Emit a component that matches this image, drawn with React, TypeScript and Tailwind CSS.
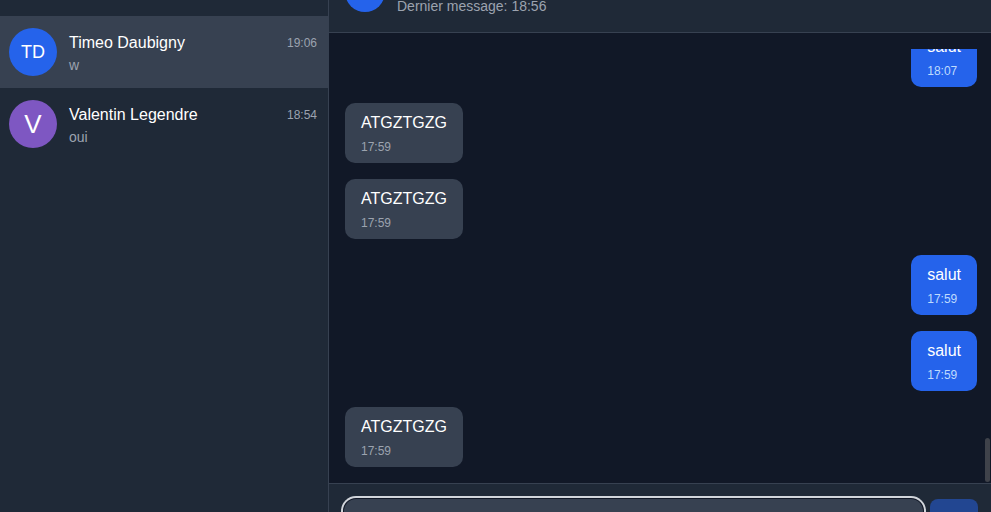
import React, { useLayoutEffect, useRef } from "react";
import { MoreVertical, Send } from "lucide-react";

type Conversation = {
  id: number;
  initials: string;
  name: string;
  preview: string;
  time: string;
  color: string;
  active?: boolean;
};

type Message = { id: number; text: string; time: string; mine: boolean };

const conversations: Conversation[] = [
  { id: 1, initials: "TD", name: "Timeo Daubigny", preview: "w", time: "19:06", color: "bg-[#2563eb]", active: true },
  { id: 2, initials: "V", name: "Valentin Legendre", preview: "oui", time: "18:54", color: "bg-[#7e57c2]" },
];

const history: Message[] = Array.from({ length: 52 }, (_, i) => ({
  id: i,
  text: i % 3 === 0 ? "salut" : i % 3 === 1 ? "ATGZTGZG" : "ça va ?",
  time: "17:5" + (i % 10),
  mine: i % 2 === 0,
}));

const messages: Message[] = [
  ...history,
  { id: 100, text: "salut", time: "18:07", mine: true },
  { id: 101, text: "ATGZTGZG", time: "17:59", mine: false },
  { id: 102, text: "ATGZTGZG", time: "17:59", mine: false },
  { id: 103, text: "salut", time: "17:59", mine: true },
  { id: 104, text: "salut", time: "17:59", mine: true },
  { id: 105, text: "ATGZTGZG", time: "17:59", mine: false },
];

function Bubble({ msg }: { msg: Message }) {
  return (
    <div className={msg.mine ? "flex justify-end shrink-0" : "flex justify-start shrink-0"}>
      <div
        className={
          msg.mine
            ? "bg-[#2563eb] text-white rounded-[10px] px-4 py-2"
            : "bg-[#374151] text-white rounded-[10px] px-4 py-2"
        }
      >
        <p className="text-base leading-6">{msg.text}</p>
        <p className={msg.mine ? "text-xs leading-4 mt-1 text-[#bfdbfe]" : "text-xs leading-4 mt-1 text-[#9ca3af]"}>
          {msg.time}
        </p>
      </div>
    </div>
  );
}

export default function App() {
  const listRef = useRef<HTMLDivElement>(null);

  useLayoutEffect(() => {
    if (listRef.current) listRef.current.scrollTop = listRef.current.scrollHeight;
  }, []);

  return (
    <div className="h-[512px] overflow-hidden bg-[#111827] font-['Liberation_Sans',Arial,sans-serif]">
      <div className="-mt-12 h-[608px] flex">
        {/* Sidebar */}
        <aside className="w-[329px] shrink-0 bg-[#1f2937] border-r border-[#374151] flex flex-col">
          <div className="h-16 px-4 flex items-center">
            <h1 className="text-xl font-semibold text-white">Messages</h1>
          </div>
          <div className="flex flex-col">
            {conversations.map((c) => (
              <div
                key={c.id}
                className={
                  c.active
                    ? "h-[72px] flex items-center gap-3 pl-[9px] pr-[11px] bg-[#374151]"
                    : "h-[72px] flex items-center gap-3 pl-[9px] pr-[11px]"
                }
              >
                <div
                  className={`w-12 h-12 rounded-full shrink-0 flex items-center justify-center text-white ${c.color} ${
                    c.initials.length === 1 ? "text-[26px]" : "text-lg"
                  }`}
                >
                  {c.initials}
                </div>
                <div className="flex-1 min-w-0 pt-px">
                  <div className="flex items-center justify-between">
                    <span className="text-base leading-6 text-white">{c.name}</span>
                    <span className="text-xs text-[#9ca3af]">{c.time}</span>
                  </div>
                  <p className="text-sm leading-5 text-[#9ca3af]">{c.preview}</p>
                </div>
              </div>
            ))}
          </div>
        </aside>

        {/* Chat */}
        <main className="flex-1 min-w-0 flex flex-col">
          <header className="bg-[#1f2937] border-b border-[#374151] px-4 py-4 flex items-center gap-3">
            <div className="w-10 h-10 rounded-full bg-[#2563eb] flex items-center justify-center text-white text-sm">
              TD
            </div>
            <div className="flex-1">
              <p className="text-lg leading-7 font-semibold text-white">Timeo Daubigny</p>
              <p className="text-sm leading-5 text-[#9ca3af]">Dernier message: 18:56</p>
            </div>
            <button className="text-white mr-[52px]">
              <MoreVertical size={20} />
            </button>
          </header>

          <div className="relative flex-1 min-h-0 flex flex-col pl-4 pr-[14px] py-4">
            <div ref={listRef} className="flex-1 min-h-0 overflow-hidden flex flex-col gap-4">
              {messages.map((m) => (
                <Bubble key={m.id} msg={m} />
              ))}
            </div>
            {/* scrollbar thumb */}
            <div className="absolute right-px bottom-px w-[5px] h-[44px] rounded-full bg-[#3f424a]" />
          </div>

          <div className="bg-[#1f2937] border-t border-[#374151] pl-[15px] pr-[13px] pt-[15px] pb-[13px] flex items-start gap-[7px]">
            <input
              className="flex-1 h-12 rounded-xl bg-[#374151] px-4 text-white outline-none ring-2 ring-[#d1d5db] ring-offset-1 ring-offset-[#111827]"
              placeholder="Écrire un message..."
            />
            <button className="w-12 h-12 rounded-lg bg-[#2563eb] opacity-50 flex items-center justify-center text-white">
              <Send size={18} />
            </button>
          </div>
        </main>
      </div>
    </div>
  );
}
